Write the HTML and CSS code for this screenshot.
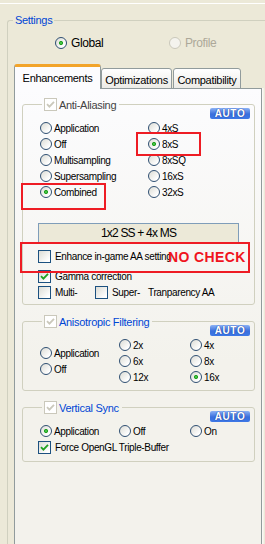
FILE: index.html
```html
<!DOCTYPE html>
<html lang="en">
<head>
    <meta charset="UTF-8">
    <meta name="viewport" content="width=device-width, initial-scale=1.0">
    <title>Enhancements</title>
    <link rel="stylesheet" href="styles.css">
</head>
<body>
    <div class="topline"></div>

    <fieldset class="settings">
        <legend>Settings</legend>

        <div class="scope">
            <label class="opt big"><span class="radio on"></span>Global</label>
            <label class="opt big muted"><span class="radio dis"></span>Profile</label>
        </div>

        <div class="tabs">
            <div class="tab active">Enhancements</div>
            <div class="tab tab-opt">Optimizations</div>
            <div class="tab tab-compat">Compatibility</div>
        </div>

        <div class="panel">
            <fieldset class="group">
                <legend>
                    <span class="check dis"><svg width="9" height="9" viewBox="0 0 9 9"><path d="M1 4.2 L3.4 6.6 L8 1.8"/></svg></span>
                    <span class="title dark">Anti-Aliasing</span>
                </legend>
                <div class="auto-row"><span class="auto">AUTO</span></div>
                <div class="aa-grid">
                    <label class="opt"><span class="radio"></span>Application</label>
                    <label class="opt"><span class="radio"></span>Off</label>
                    <label class="opt"><span class="radio"></span>Multisampling</label>
                    <label class="opt"><span class="radio"></span>Supersampling</label>
                    <label class="opt"><span class="radio on"></span>Combined</label>
                    <label class="opt"><span class="radio"></span>4xS</label>
                    <label class="opt"><span class="radio on"></span>8xS</label>
                    <label class="opt"><span class="radio"></span>8xSQ</label>
                    <label class="opt"><span class="radio"></span>16xS</label>
                    <label class="opt"><span class="radio"></span>32xS</label>
                </div>
                <div class="mode-box">1x2 SS + 4x MS</div>
                <label class="opt check-row enhance"><span class="check"></span>Enhance in-game AA setting</label>
                <label class="opt check-row gamma"><span class="check"><svg width="9" height="9" viewBox="0 0 9 9"><path d="M1 4.2 L3.4 6.6 L8 1.8"/></svg></span>Gamma correction</label>
                <div class="tr-row">
                    <label class="opt"><span class="check"></span>Multi-</label>
                    <label class="opt"><span class="check"></span>Super-</label>
                    <span>Tranparency AA</span>
                </div>
            </fieldset>

            <fieldset class="group aniso">
                <legend>
                    <span class="check dis"><svg width="9" height="9" viewBox="0 0 9 9"><path d="M1 4.2 L3.4 6.6 L8 1.8"/></svg></span>
                    <span class="title">Anisotropic Filtering</span>
                </legend>
                <div class="auto-row"><span class="auto">AUTO</span></div>
                <div class="three-col">
                    <div class="col">
                        <label class="opt"><span class="radio"></span>Application</label>
                        <label class="opt"><span class="radio"></span>Off</label>
                    </div>
                    <div class="col">
                        <label class="opt"><span class="radio"></span>2x</label>
                        <label class="opt"><span class="radio"></span>6x</label>
                        <label class="opt"><span class="radio"></span>12x</label>
                    </div>
                    <div class="col">
                        <label class="opt"><span class="radio"></span>4x</label>
                        <label class="opt"><span class="radio"></span>8x</label>
                        <label class="opt"><span class="radio on"></span>16x</label>
                    </div>
                </div>
            </fieldset>

            <fieldset class="group vsync">
                <legend>
                    <span class="check dis"><svg width="9" height="9" viewBox="0 0 9 9"><path d="M1 4.2 L3.4 6.6 L8 1.8"/></svg></span>
                    <span class="title">Vertical Sync</span>
                </legend>
                <div class="auto-row"><span class="auto">AUTO</span></div>
                <div class="three-col">
                    <label class="opt"><span class="radio on"></span>Application</label>
                    <label class="opt"><span class="radio"></span>Off</label>
                    <label class="opt"><span class="radio"></span>On</label>
                </div>
                <label class="opt check-row"><span class="check"><svg width="9" height="9" viewBox="0 0 9 9"><path d="M1 4.2 L3.4 6.6 L8 1.8"/></svg></span>Force OpenGL Triple-Buffer</label>
            </fieldset>
        </div>
    </fieldset>

    <div class="mark mark-8xs"></div>
    <div class="mark mark-combined"></div>
    <div class="mark mark-enhance"></div>
    <div class="no-check">NO CHECK</div>
</body>
</html>
```

FILE: styles.css
```css
body {
    position: relative;
    margin: 0;
    width: 265px;
    height: 544px;
    overflow: hidden;
    background-color: #ECE9D8;
    font-family: "Liberation Sans", Arial, sans-serif;
    font-size: 10px;
    letter-spacing: -0.35px;
    color: #000;
}

.topline {
    margin-top: 3px;
    border-top: 1px solid #fff;
}

/* the Settings frame runs on past the right and bottom edge of the window */
.settings {
    box-sizing: border-box;
    width: 258px;
    height: 530px;
    margin: 10px 0 0 7px;
    padding: 0 0 0 6px;
    border: 1px solid #D0D0BF;
    border-right: none;
    border-bottom: none;
    border-radius: 3px 0 0 0;
}

.settings > legend {
    margin-left: -1px;
    padding: 0 2px;
    line-height: 13px;
    font-size: 11px;
    letter-spacing: -0.3px;
    color: #0046D5;
}

.scope {
    display: grid;
    grid-template-columns: 114px auto;
    margin: 9px 0 0 41px;
}

.opt {
    display: flex;
    align-items: center;
    gap: 2px;
    white-space: nowrap;
}

.opt.big {
    gap: 4px;
    height: 13px;
    font-size: 12px;
    letter-spacing: -0.4px;
}

.muted {
    color: #ACA899;
}

/* radio buttons and check boxes */
.radio {
    flex: none;
    box-sizing: border-box;
    width: 12px;
    height: 12px;
    border: 1px solid #2F4F72;
    border-radius: 50%;
    background: linear-gradient(135deg, #DCDCD5, #fff 80%);
}

.radio.on {
    background: radial-gradient(circle, #5FDA5F 0, #21A121 1.6px, transparent 2.4px),
                linear-gradient(135deg, #DCDCD5, #fff 80%);
}

.radio.dis {
    border-color: #CAC8BB;
    background: #F4F3EE;
}

.check {
    flex: none;
    display: flex;
    align-items: center;
    justify-content: center;
    box-sizing: border-box;
    width: 13px;
    height: 13px;
    margin-right: 2px;
    border: 1px solid #1C5180;
    background: linear-gradient(135deg, #DCDCD5, #fff 85%);
}

.check svg path {
    fill: none;
    stroke: #21A121;
    stroke-width: 1.8;
}

.check.dis {
    border-color: #CAC8BB;
    background: #fff;
}

.check.dis svg path {
    stroke: #CAC8BB;
}

/* tabs */
.tabs {
    display: flex;
    align-items: flex-end;
    margin-top: 15px;
    margin-bottom: -1px;
    font-size: 11px;
    letter-spacing: -0.3px;
}

.tab {
    box-sizing: border-box;
    display: flex;
    align-items: center;
    justify-content: center;
    height: 21px;
    padding-top: 2px;
    border: 1px solid #919B9C;
    border-radius: 3px 3px 0 0;
    background: linear-gradient(#fff, #ECEBE6);
}

.tab.active {
    position: relative;
    z-index: 1;
    width: 87px;
    height: 25px;
    padding-top: 0;
    border-top: 3px solid #F2A42A;
    border-bottom: none;
    background: #FCFCFE;
}

.tab-opt {
    width: 71px;
}

.tab-compat {
    width: 68px;
    margin-left: 1px;
}

.panel {
    box-sizing: border-box;
    width: 248px;
    height: 456px;
    padding: 9px 6px 0 7px;
    border: 1px solid #919B9C;
    border-bottom: none;
    background: linear-gradient(#FCFCFE, #F3F2EC 60%);
    box-shadow: 1px 0 0 #FAF9F4, 2px 0 0 #F4F2EA;
}

/* group boxes */
.group {
    margin: 0;
    padding: 0 4px 4px 15px;
    min-width: 0;
    border: 1px solid #D0D0BF;
    border-radius: 3px;
}

.group > legend {
    display: flex;
    align-items: center;
    margin-left: 4px;
    padding: 0 3px 0 2px;
    height: 13px;
}

.title {
    font-size: 11px;
    letter-spacing: -0.3px;
    color: #0046D5;
}

.title.dark {
    color: #444;
}

.auto-row {
    display: flex;
    justify-content: flex-end;
    margin: -3px 0 1px;
}

.auto {
    width: 40px;
    height: 11px;
    line-height: 11px;
    border-radius: 2px;
    background: linear-gradient(#8CB2F5, #3A6FDC 55%, #3D78E6);
    color: #fff;
    font-size: 10px;
    font-weight: bold;
    letter-spacing: 0.6px;
    text-align: center;
    text-shadow: 0 0 1px #1B3F9E, 0 0 1px #1B3F9E;
}

.aa-grid {
    display: grid;
    grid-template-rows: repeat(5, 16px);
    grid-template-columns: 108px 1fr;
    grid-auto-flow: column;
    padding-left: 2px;
}

.mode-box {
    box-sizing: border-box;
    width: 201px;
    height: 20px;
    margin-top: 23px;
    border: 1px solid #7F9DB9;
    background: #ECE9D8;
    font-size: 12px;
    letter-spacing: -0.8px;
    line-height: 18px;
    text-align: center;
}

.check-row {
    height: 16px;
}

.enhance {
    margin-top: 5px;
}

.gamma {
    margin-top: 4px;
}

.tr-row {
    display: grid;
    grid-template-columns: 57px 53px auto;
    align-items: center;
    height: 16px;
}

.three-col {
    display: grid;
    grid-template-columns: 79px 71px 1fr;
    align-items: center;
    padding-left: 2px;
}

.aniso {
    margin-top: 10px;
    padding-bottom: 5px;
}

.vsync {
    margin-top: 10px;
    padding-bottom: 6px;
}

.col {
    display: grid;
    grid-auto-rows: 16px;
}

.vsync .three-col {
    height: 16px;
}

/* red annotation marks */
.mark {
    position: absolute;
    box-sizing: border-box;
    border: 2px solid #EE1C24;
}

.mark-8xs {
    left: 136px;
    top: 132px;
    width: 65px;
    height: 24px;
}

.mark-combined {
    left: 21px;
    top: 183px;
    width: 85px;
    height: 27px;
}

.mark-enhance {
    left: 20px;
    top: 242px;
    width: 230px;
    height: 31px;
}

.no-check {
    position: absolute;
    left: 168px;
    top: 250px;
    font-size: 14px;
    line-height: 14px;
    font-weight: bold;
    letter-spacing: 0.4px;
    color: #F0141E;
}
```
